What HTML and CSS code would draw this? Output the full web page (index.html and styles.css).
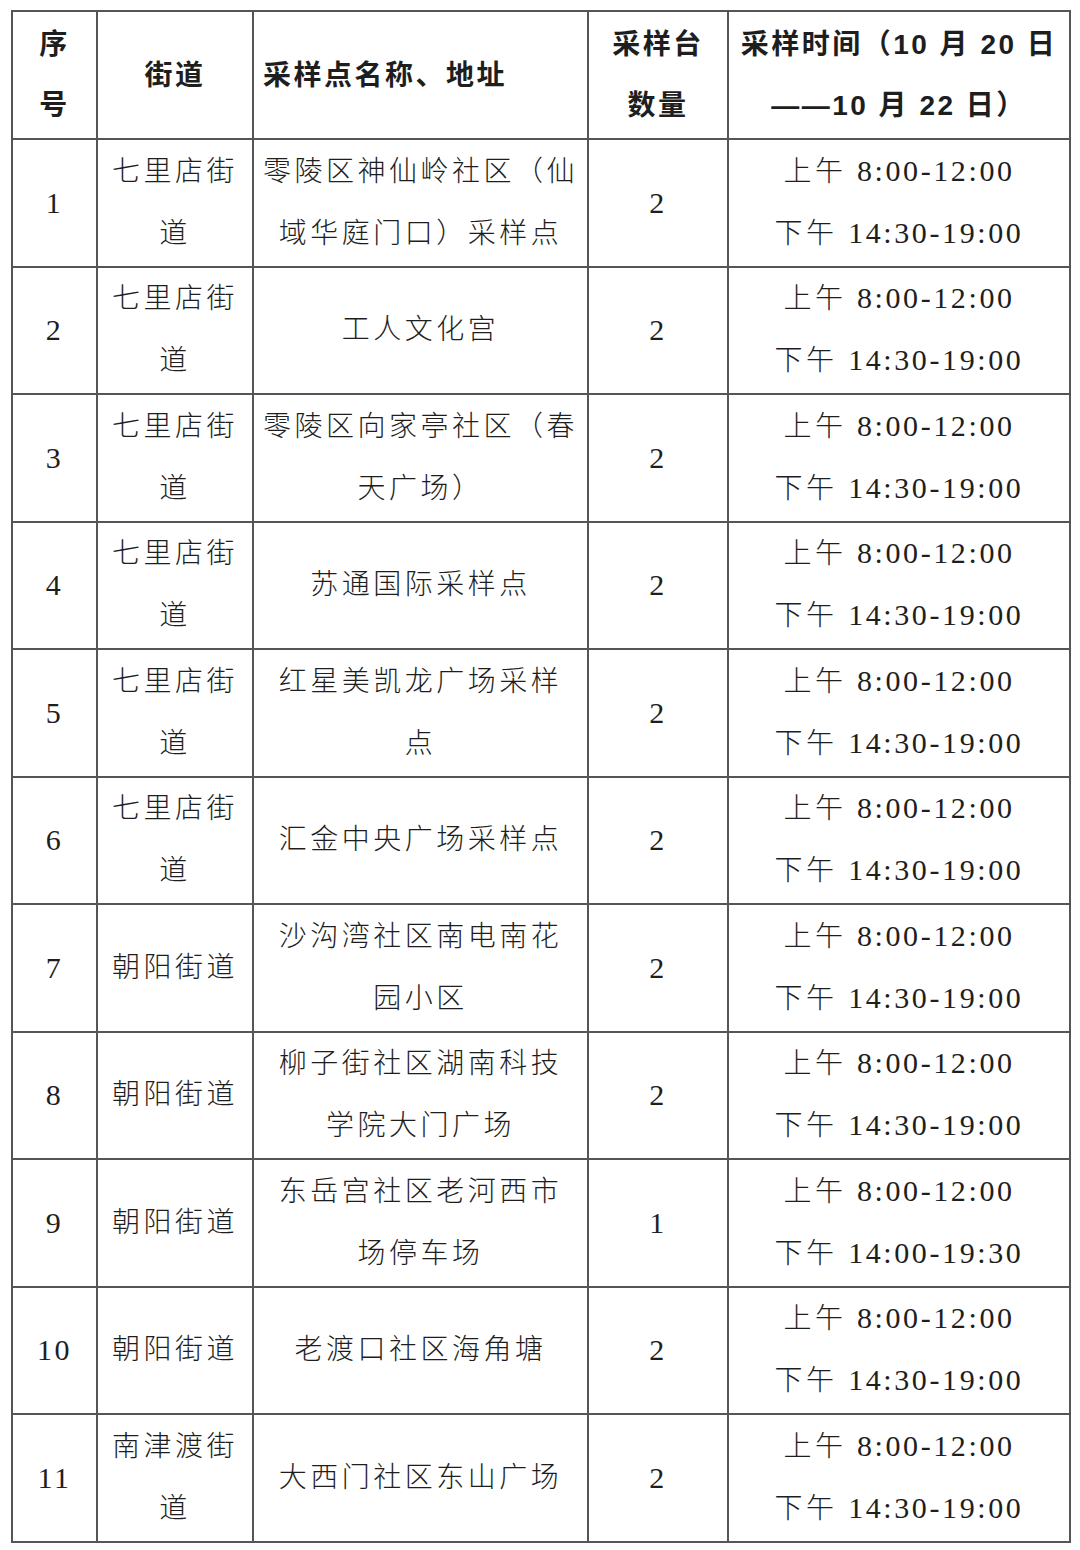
FILE: index.html
```html
<!DOCTYPE html>
<html lang="zh-CN">
<head>
<meta charset="utf-8">
<link rel="stylesheet" href="styles.css">
</head>
<body>
<table class="sched">
  <colgroup>
    <col class="c1"><col class="c2"><col class="c3"><col class="c4"><col class="c5">
  </colgroup>
  <thead>
    <tr>
      <th>序<br>号</th>
      <th>街道</th>
      <th class="left">采样点名称、地址</th>
      <th>采样台<br>数量</th>
      <th>采样时间（10 月 20 日<br>——10 月 22 日）</th>
    </tr>
  </thead>
  <tbody>
    <tr><td class="num">1</td><td>七里店街<br>道</td><td>零陵区神仙岭社区（仙<br>域华庭门口）采样点</td><td class="num">2</td><td>上午 <span class="num">8:00-12:00</span><br>下午 <span class="num">14:30-19:00</span></td></tr>
    <tr><td class="num">2</td><td>七里店街<br>道</td><td>工人文化宫</td><td class="num">2</td><td>上午 <span class="num">8:00-12:00</span><br>下午 <span class="num">14:30-19:00</span></td></tr>
    <tr><td class="num">3</td><td>七里店街<br>道</td><td>零陵区向家亭社区（春<br>天广场）</td><td class="num">2</td><td>上午 <span class="num">8:00-12:00</span><br>下午 <span class="num">14:30-19:00</span></td></tr>
    <tr><td class="num">4</td><td>七里店街<br>道</td><td>苏通国际采样点</td><td class="num">2</td><td>上午 <span class="num">8:00-12:00</span><br>下午 <span class="num">14:30-19:00</span></td></tr>
    <tr><td class="num">5</td><td>七里店街<br>道</td><td>红星美凯龙广场采样<br>点</td><td class="num">2</td><td>上午 <span class="num">8:00-12:00</span><br>下午 <span class="num">14:30-19:00</span></td></tr>
    <tr><td class="num">6</td><td>七里店街<br>道</td><td>汇金中央广场采样点</td><td class="num">2</td><td>上午 <span class="num">8:00-12:00</span><br>下午 <span class="num">14:30-19:00</span></td></tr>
    <tr><td class="num">7</td><td>朝阳街道</td><td>沙沟湾社区南电南花<br>园小区</td><td class="num">2</td><td>上午 <span class="num">8:00-12:00</span><br>下午 <span class="num">14:30-19:00</span></td></tr>
    <tr><td class="num">8</td><td>朝阳街道</td><td>柳子街社区湖南科技<br>学院大门广场</td><td class="num">2</td><td>上午 <span class="num">8:00-12:00</span><br>下午 <span class="num">14:30-19:00</span></td></tr>
    <tr><td class="num">9</td><td>朝阳街道</td><td>东岳宫社区老河西市<br>场停车场</td><td class="num">1</td><td>上午 <span class="num">8:00-12:00</span><br>下午 <span class="num">14:00-19:30</span></td></tr>
    <tr><td class="num">10</td><td>朝阳街道</td><td>老渡口社区海角塘</td><td class="num">2</td><td>上午 <span class="num">8:00-12:00</span><br>下午 <span class="num">14:30-19:00</span></td></tr>
    <tr><td class="num">11</td><td>南津渡街<br>道</td><td>大西门社区东山广场</td><td class="num">2</td><td>上午 <span class="num">8:00-12:00</span><br>下午 <span class="num">14:30-19:00</span></td></tr>
  </tbody>
</table>
</body>
</html>
```
FILE: styles.css
```css
html, body {
  margin: 0;
  padding: 0;
  background: #ffffff;
}
body {
  padding: 10px 0 0 11px;
}
.sched {
  border-collapse: collapse;
  table-layout: fixed;
  width: 1058px;
  color: #1e1e1e;
}
.c1 { width: 85px; }
.c2 { width: 156px; }
.c3 { width: 335px; }
.c4 { width: 140px; }
.c5 { width: 342px; }
.sched th, .sched td {
  border: 2px solid #555555;
  padding: 0;
  text-align: center;
  vertical-align: middle;
  white-space: nowrap;
  overflow: hidden;
}
.sched th {
  height: 126px;
  font-family: "Liberation Sans", "Noto Sans CJK SC", sans-serif;
  font-weight: 700;
  font-size: 28px;
  line-height: 61px;
  letter-spacing: 2.5px;
}
.sched th.left {
  text-align: left;
  padding-left: 9px;
}
.sched td {
  height: 125.5px;
  font-family: "Liberation Serif", "Noto Sans CJK SC", serif;
  font-weight: 300;
  font-size: 28px;
  line-height: 62px;
  letter-spacing: 3.5px;
}
.sched span.num {
  line-height: 1;
}
.sched .num {
  font-family: "Liberation Serif", serif;
  font-weight: 400;
  font-size: 30px;
  letter-spacing: 2.6px;
}
```
